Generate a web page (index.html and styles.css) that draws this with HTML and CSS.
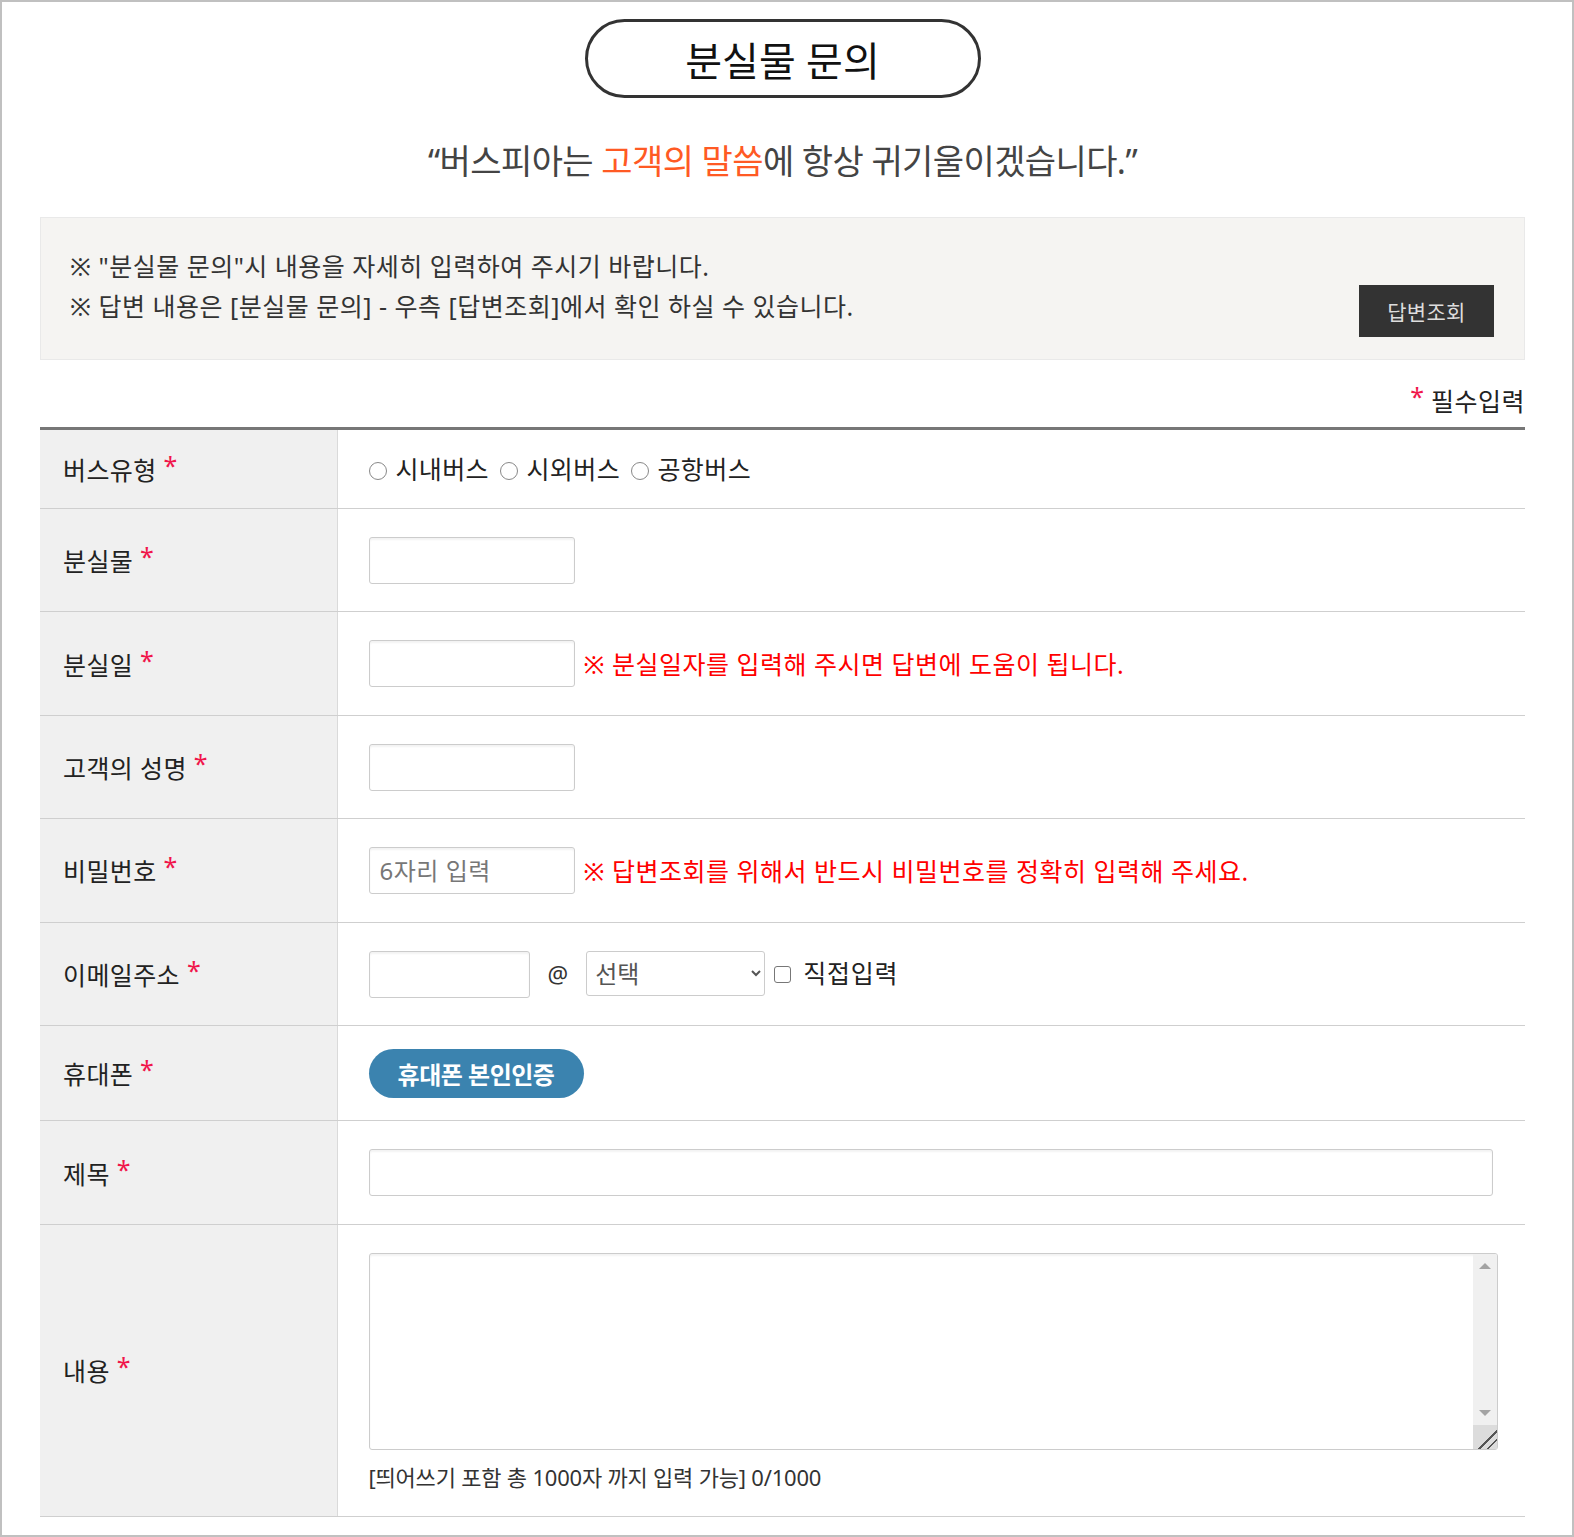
FILE: index.html
```html
<!DOCTYPE html>
<html lang="ko">
<head>
<meta charset="utf-8">
<title>분실물 문의</title>
<link rel="stylesheet" href="styles.css">
</head>
<body>
<div class="page">
  <div class="wrap">
    <div class="title-row"><h1 class="title">분실물 문의</h1></div>
    <p class="slogan">“버스피아는 <em>고객의 말씀</em>에 항상 귀기울이겠습니다.”</p>

    <div class="notice">
      <div class="notice-text">
        <p>※ "분실물 문의"시 내용을 자세히 입력하여 주시기 바랍니다.</p>
        <p>※ 답변 내용은 [분실물 문의] - 우측 [답변조회]에서 확인 하실 수 있습니다.</p>
      </div>
      <button class="btn-dark" type="button">답변조회</button>
    </div>

    <div class="req-note"><span class="star">*</span> 필수입력</div>

    <table class="form">
      <colgroup><col class="col-head"><col></colgroup>
      <tr class="row-radio">
        <th>버스유형 <span class="star">*</span></th>
        <td>
          <label class="opt"><input type="radio" name="bus"> 시내버스</label>
          <label class="opt"><input type="radio" name="bus"> 시외버스</label>
          <label class="opt"><input type="radio" name="bus"> 공항버스</label>
        </td>
      </tr>
      <tr>
        <th>분실물 <span class="star">*</span></th>
        <td><input class="txt" type="text"></td>
      </tr>
      <tr>
        <th>분실일 <span class="star">*</span></th>
        <td><input class="txt" type="text"><span class="warn">※ 분실일자를 입력해 주시면 답변에 도움이 됩니다.</span></td>
      </tr>
      <tr>
        <th>고객의 성명 <span class="star">*</span></th>
        <td><input class="txt" type="text"></td>
      </tr>
      <tr>
        <th>비밀번호 <span class="star">*</span></th>
        <td><input class="txt" type="password" placeholder="6자리 입력"><span class="warn">※ 답변조회를 위해서 반드시 비밀번호를 정확히 입력해 주세요.</span></td>
      </tr>
      <tr>
        <th>이메일주소 <span class="star">*</span></th>
        <td>
          <div class="email">
            <input class="txt txt-mail" type="text">
            <span class="at">@</span>
            <select class="sel"><option>선택</option></select>
            <label class="direct"><input type="checkbox"> 직접입력</label>
          </div>
        </td>
      </tr>
      <tr class="row-phone">
        <th>휴대폰 <span class="star">*</span></th>
        <td><button class="btn-phone" type="button">휴대폰 본인인증</button></td>
      </tr>
      <tr>
        <th>제목 <span class="star">*</span></th>
        <td><input class="txt txt-wide" type="text"></td>
      </tr>
      <tr class="row-area">
        <th>내용 <span class="star">*</span></th>
        <td>
          <div class="area-box">
            <textarea class="area"></textarea>
            <div class="sb" aria-hidden="true">
              <span class="sb-up"></span>
              <span class="sb-track"></span>
              <span class="sb-down"></span>
              <span class="sb-grip"></span>
            </div>
          </div>
          <p class="count">[띄어쓰기 포함 총 1000자 까지 입력 가능] 0/1000</p>
        </td>
      </tr>
    </table>
  </div>
</div>
</body>
</html>
```

FILE: styles.css
```css
* { box-sizing: border-box; }
html, body { margin: 0; padding: 0; background: #fff; }
body {
  font-family: "Noto Sans", "Noto Sans CJK KR", sans-serif;
  color: #222;
}
.page {
  width: 1574px;
  height: 1537px;
  border: 2px solid #c0c0c0;
  overflow: hidden;
}
.wrap {
  width: 1485px;
  margin-left: 38px;
}
.title-row {
  display: flex;
  justify-content: center;
  padding-top: 17px;
}
.title {
  margin: 0;
  width: 396px;
  height: 79px;
  border: 3px solid #333;
  border-radius: 40px;
  display: flex;
  align-items: center;
  justify-content: center;
  font-size: 40px;
  font-weight: 400;
  color: #111;
  letter-spacing: 0;
}
.slogan {
  margin: 0;
  padding-top: 41px;
  height: 119px;
  text-align: center;
  font-size: 34px;
  letter-spacing: -0.6px;
  color: #444;
  line-height: 1.3;
}
.slogan em { font-style: normal; color: #ff5a24; }

.notice {
  background: #f5f4f2;
  border: 1px solid #e9e9e9;
  height: 143px;
  display: flex;
  align-items: flex-end;
  justify-content: space-between;
  padding: 0 30px 22px 29px;
}
.notice-text { align-self: center; padding-top: 16px; }
.notice-text p {
  margin: 0;
  font-size: 25px;
  letter-spacing: 0.5px;
  line-height: 40px;
  color: #333;
}
.btn-dark {
  width: 135px;
  height: 52px;
  background: #333;
  color: #ddd;
  border: 0;
  font-family: inherit;
  font-size: 21px;
  letter-spacing: 0.3px;
  padding: 0;
}

.req-note {
  text-align: right;
  font-size: 25px;
  padding-top: 22px;
  height: 67px;
  color: #222;
  letter-spacing: 0.5px;
}
.star {
  color: #f0164b;
  font-size: 25px;
  position: relative;
  top: -5px;
  letter-spacing: 0;
}

.form {
  width: 100%;
  table-layout: fixed;
  border-collapse: collapse;
  border-top: 3px solid #777;
}
.col-head { width: 297px; }
.form th, .form td {
  border-bottom: 1px solid #cfcfcf;
  vertical-align: middle;
}
.form th {
  background: #f0f0f0;
  border-right: 1px solid #dadada;
  text-align: left;
  font-weight: normal;
  font-size: 25px;
  letter-spacing: 0.4px;
  padding: 0 0 0 23px;
  color: #222;
}
.form td {
  padding: 22px 0 22.4px 31px;
  font-size: 25px;
}
.row-radio td { padding-top: 20px; padding-bottom: 19px; line-height: 39px; }
.row-phone td { padding-top: 23px; padding-bottom: 22.4px; }

.opt { margin-right: 4px; letter-spacing: 0.4px; color: #222; }
.opt input {
  appearance: none;
  -webkit-appearance: none;
  width: 18px;
  height: 18px;
  border: 1px solid #888;
  border-radius: 50%;
  margin: 0 2px 0 0;
  vertical-align: -1px;
  background: #fff;
}

.txt {
  height: 47px;
  width: 206px;
  border: 1px solid #ccc;
  border-radius: 3px;
  margin: 6px 0 5px;
  padding: 0 10px;
  font-family: inherit;
  font-size: 24px;
  box-shadow: inset 0 2px 2px rgba(0,0,0,0.05);
  vertical-align: middle;
  background: #fff;
}
.txt::placeholder { color: #777; letter-spacing: 0.5px; }
.txt-wide { width: 1124px; }
.txt-mail { width: 161px; }
.warn {
  color: #f00;
  margin-left: 9px;
  letter-spacing: 0.5px;
  vertical-align: middle;
}

.email { display: flex; align-items: center; }
.at { margin: 0 18px 0 18px; font-size: 23px; color: #333; }
.sel {
  width: 179px;
  height: 45px;
  border: 1px solid #ccc;
  border-radius: 3px;
  background: #fff;
  font-family: inherit;
  font-size: 24px;
  color: #555;
  padding: 0 4px;
  margin: 0 9px 0 0;
}
.direct { display: flex; align-items: center; letter-spacing: 0.8px; color: #222; margin-top: -4px; }
.direct input {
  appearance: none;
  -webkit-appearance: none;
  width: 17px;
  height: 17px;
  border: 1px solid #777;
  border-radius: 3px;
  margin: 5px 12px 0 0;
  background: #fff;
}

.btn-phone {
  width: 215px;
  height: 49px;
  border: 0;
  border-radius: 25px;
  background: #3b83af;
  color: #fff;
  font-family: inherit;
  font-size: 24px;
  font-weight: 700;
  letter-spacing: -0.5px;
  padding: 0;
  display: block;
}

.row-area td { padding-bottom: 24px; }
.area-box {
  position: relative;
  width: 1129px;
  margin-top: 6px;
}
.area {
  display: block;
  width: 100%;
  height: 197px;
  border: 1px solid #ccc;
  border-radius: 3px;
  resize: none;
  font-family: inherit;
  font-size: 20px;
  padding: 4px 30px 4px 6px;
  box-shadow: inset 0 2px 2px rgba(0,0,0,0.05);
}
.sb {
  position: absolute;
  top: 1px;
  right: 1px;
  bottom: 1px;
  width: 24px;
  background: #f0f0f0;
  display: flex;
  flex-direction: column;
  pointer-events: none;
  border-top-right-radius: 2px;
}
.sb-up, .sb-down {
  height: 24px;
  display: flex;
  align-items: center;
  justify-content: center;
}
.sb-up::before {
  content: "";
  border-left: 6px solid transparent;
  border-right: 6px solid transparent;
  border-bottom: 6px solid #a3a3a3;
}
.sb-down::before {
  content: "";
  border-left: 6px solid transparent;
  border-right: 6px solid transparent;
  border-top: 6px solid #a3a3a3;
}
.sb-track { flex: 1; }
.sb-grip {
  height: 24px;
  background:
    linear-gradient(135deg, transparent 60%, #555 60%, #555 65%, transparent 65%, transparent 78%, #555 78%, #555 83%, transparent 83%),
    #dcdcdc;
}
.count {
  margin: 12px 0 0;
  font-size: 22px;
  color: #333;
  line-height: 30px;
  letter-spacing: -0.2px;
}
```
